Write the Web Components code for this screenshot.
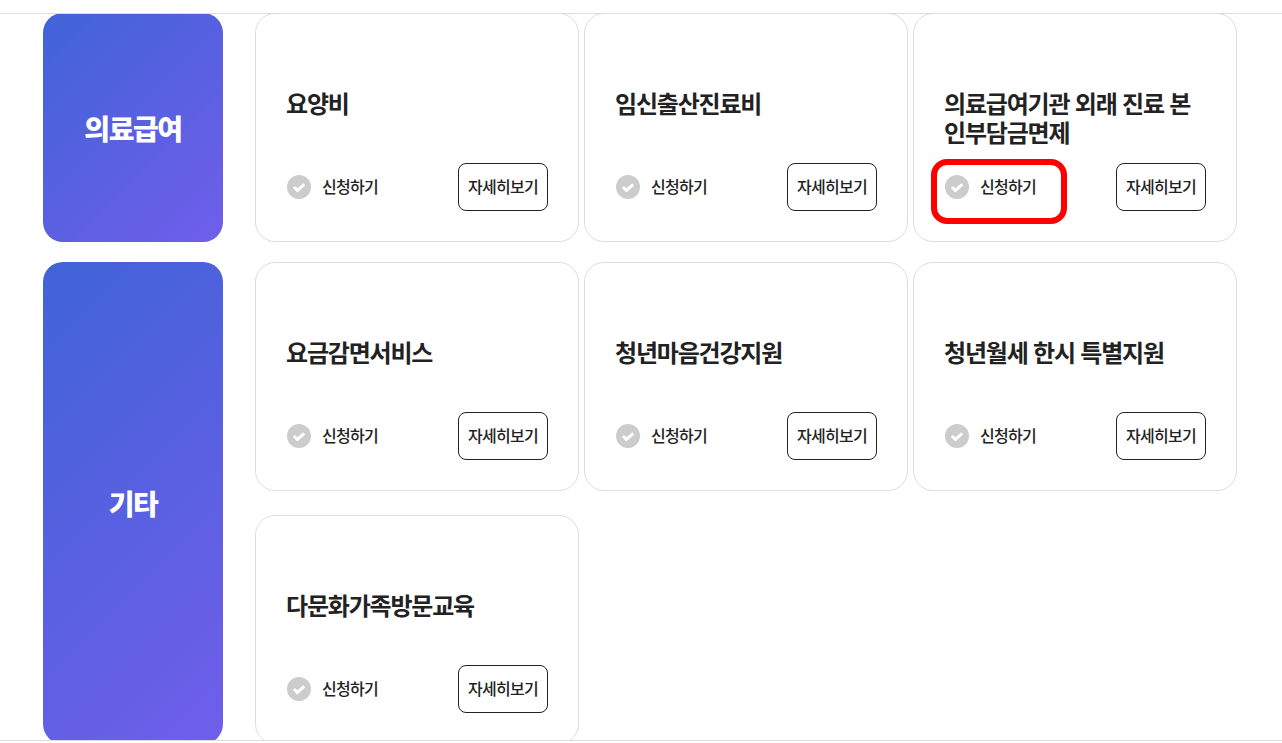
<!DOCTYPE html>
<html lang="ko">
<head>
<meta charset="utf-8">
<title>서비스 목록</title>
<style>
html, body { margin: 0; padding: 0; background: #fff; }
body { font-family: "Noto Sans CJK KR", "Noto Sans", sans-serif; color: #222; height: 743px; overflow: hidden; }
</style>
</head>
<body>
<service-frame>
    <service-group label="의료급여">
        <service-card name="요양비"></service-card>
        <service-card name="임신출산진료비"></service-card>
        <service-card name="의료급여기관 외래 진료 본인부담금면제" marked></service-card>
    </service-group>
    <service-group label="기타">
        <service-card name="요금감면서비스"></service-card>
        <service-card name="청년마음건강지원"></service-card>
        <service-card name="청년월세 한시 특별지원"></service-card>
        <service-card name="다문화가족방문교육"></service-card>
    </service-group>
</service-frame>

<script>
class ServiceFrame extends HTMLElement {
    constructor() {
        super();
        this.attachShadow({ mode: 'open' });
    }

    connectedCallback() {
        this.shadowRoot.innerHTML = `
            <style>
            :host {
                display: block;
                margin-top: 13px;
                height: 726px;
                border-top: 1px solid #ddd;
                border-bottom: 1px solid #ddd;
                overflow: hidden;
            }
            #inner {
                display: flex;
                flex-direction: column;
                gap: 20px;
                padding: 0 45px 0 43px;
                margin-top: -1px;
            }
            </style>
            <div id="inner"><slot></slot></div>
        `;
    }
}

class ServiceGroup extends HTMLElement {
    constructor() {
        super();
        this.attachShadow({ mode: 'open' });
    }

    connectedCallback() {
        this.shadowRoot.innerHTML = `
            <style>
            :host {
                display: grid;
                grid-template-columns: 180px 1fr;
                gap: 32px;
            }
            #side {
                display: flex;
                align-items: center;
                justify-content: center;
                border-radius: 20px;
                background: linear-gradient(135deg, #4063d8 0%, #705eea 100%);
                color: #fff;
                font-size: 28px;
                font-weight: 800;
                letter-spacing: -1.4px;
            }
            #cards {
                display: grid;
                grid-template-columns: repeat(3, 324px);
                column-gap: 5px;
                row-gap: 24px;
            }
            </style>
            <div id="side">${this.getAttribute('label')}</div>
            <div id="cards"><slot></slot></div>
        `;
    }
}

class ServiceCard extends HTMLElement {
    constructor() {
        super();
        this.attachShadow({ mode: 'open' });
    }

    connectedCallback() {
        const mark = this.hasAttribute('marked') ? '<div id="mark"></div>' : '';
        this.shadowRoot.innerHTML = `
            <style>
            :host {
                display: block;
                position: relative;
                box-sizing: border-box;
                height: 229px;
                padding: 0 30px 30px 31px;
                background: #fff;
                border: 1px solid #ddd;
                border-radius: 20px;
            }
            #wrap {
                display: flex;
                flex-direction: column;
                height: 100%;
            }
            h3 {
                flex: 1;
                margin: 0 0 0 -1px;
                padding-top: 74px;
                font-size: 24px;
                line-height: 29px;
                font-weight: 700;
                letter-spacing: -1.2px;
                color: #222;
            }
            #actions {
                display: flex;
                align-items: center;
                justify-content: space-between;
            }
            #apply {
                display: flex;
                align-items: center;
                gap: 11px;
                font-size: 16px;
                font-weight: 500;
                letter-spacing: -0.7px;
                color: #222;
            }
            #apply span { padding-bottom: 2px; }
            svg { display: block; }
            #more {
                box-sizing: border-box;
                width: 90px;
                height: 48px;
                padding: 0 0 2px;
                background: #fff;
                border: 1px solid #222;
                border-radius: 8px;
                font: inherit;
                font-size: 16px;
                font-weight: 500;
                letter-spacing: -0.7px;
                color: #222;
                cursor: pointer;
            }
            #mark {
                position: absolute;
                left: 17px;
                top: 145px;
                width: 136px;
                height: 65px;
                box-sizing: border-box;
                border: 6px solid #f00;
                border-radius: 16px;
            }
            </style>
            <div id="wrap">
                <h3>${this.getAttribute('name')}</h3>
                <div id="actions">
                    <div id="apply">
                        <svg width="24" height="24" viewBox="0 0 24 24">
                            <circle cx="12" cy="12" r="12" fill="#ccc"/>
                            <path d="M6.9 12l3.5 3.4 6.9-6" fill="none" stroke="#fff" stroke-width="3"/>
                        </svg>
                        <span>신청하기</span>
                    </div>
                    <button id="more">자세히보기</button>
                </div>
            </div>
            ${mark}
        `;
    }
}

customElements.define('service-frame', ServiceFrame);
customElements.define('service-group', ServiceGroup);
customElements.define('service-card', ServiceCard);
</script>
</body>
</html>
